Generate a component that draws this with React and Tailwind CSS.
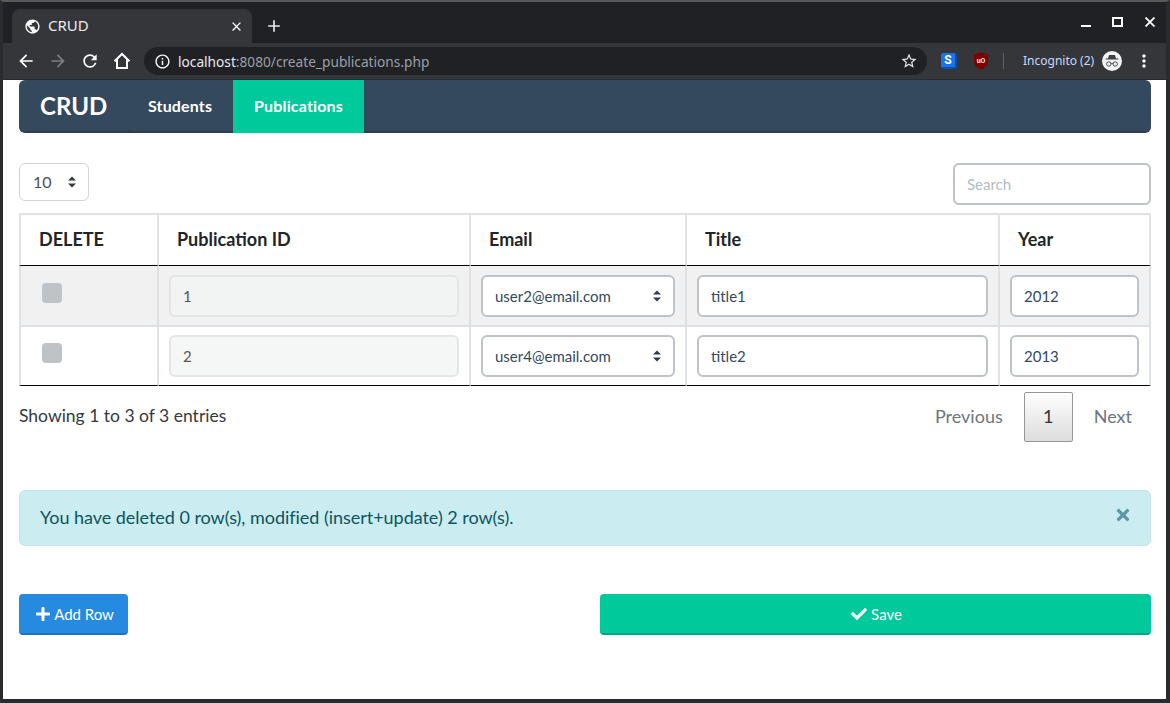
import { FaPlus, FaCheck, FaTimes } from 'react-icons/fa';
import { MdPublic, MdArrowBack, MdArrowForward, MdRefresh, MdMoreVert, MdInfoOutline, MdStarBorder, MdClose, MdAdd } from 'react-icons/md';

function Caret({ className }) {
  return (
    <svg width="8" height="12" viewBox="0 0 8 12" className={className}>
      <path d="M0 4.6 L4 0.6 L8 4.6 Z M0 7.4 L4 11.4 L8 7.4 Z" fill="currentColor" />
    </svg>
  );
}

function HomeIcon() {
  return (
    <svg width="18" height="18" viewBox="0 0 18 18" fill="none" stroke="white" strokeWidth="2">
      <path d="M1.5 9.2 L9 2 L16.5 9.2 M4 7.5 V16 H14 V7.5" />
    </svg>
  );
}

function IncognitoBadge() {
  return (
    <div className="w-5 h-5 rounded-full bg-[#f1f3f4] flex items-center justify-center">
      <svg width="16" height="14" viewBox="0 0 16 14" fill="none">
        <path d="M5 1 H11 L12 4.4 H14.4 V5.4 H1.6 V4.4 H4 Z" fill="#3c4043" />
        <circle cx="4.8" cy="10" r="2.2" stroke="#3c4043" strokeWidth="0.9" />
        <circle cx="11.2" cy="10" r="2.2" stroke="#3c4043" strokeWidth="0.9" />
        <path d="M7 9.6 H9" stroke="#3c4043" strokeWidth="0.9" />
      </svg>
    </div>
  );
}

function UblockIcon() {
  return (
    <svg width="16" height="18" viewBox="0 0 16 18">
      <path d="M8 0.5 L15 2.6 V9.5 C15 13.5 11.5 16 8 17.5 C4.5 16 1 13.5 1 9.5 V2.6 Z" fill="#800000" />
      <text x="8" y="11" textAnchor="middle" fontSize="7" fontWeight="700" fill="#e8e8e8" fontFamily="Roboto, sans-serif">uO</text>
    </svg>
  );
}

function StylusIcon() {
  return (
    <div className="w-4 h-4 rounded-[2px] bg-[#1a73e8] border-r-2 border-b-2 border-[#0d4fa8] flex items-center justify-center text-[12px] font-bold text-white leading-none font-['Roboto',sans-serif]">
      S
    </div>
  );
}

function TabStrip() {
  return (
    <div className="h-[41px] flex items-end pl-[9px] bg-[#202124]">
      <div className="w-[240px] h-[34px] bg-[#35363a] rounded-t-lg flex items-center pl-[12px] pr-[8px] text-[#e8eaed]">
        <MdPublic size={17} className="text-white" />
        <span className="ml-[7px] -mt-[2px] flex-1 text-[15px] font-['Noto_Sans',sans-serif]">CRUD</span>
        <MdClose size={15} className="text-white" />
      </div>
      <div className="h-[34px] ml-[12px] flex items-center">
        <MdAdd size={20} className="text-[#e8eaed]" />
      </div>
      <div className="flex-1 h-full flex items-start justify-end pr-[11px] pt-[15px] text-white">
        <div className="w-[10px] h-[10px] flex items-end">
          <div className="w-[10px] h-[2px] bg-white" />
        </div>
        <div className="w-[11px] h-[10px] border-2 border-white ml-[21px]" />
        <svg width="10" height="10" viewBox="0 0 10 10" stroke="white" strokeWidth="1.8" className="ml-[22px]">
          <path d="M0.5 0.5 L9.5 9.5 M9.5 0.5 L0.5 9.5" />
        </svg>
      </div>
    </div>
  );
}

function Toolbar() {
  return (
    <div className="h-[37px] bg-[#35363a] flex items-center pl-[13px] border-b border-[#2a2b2e] font-['Noto_Sans',sans-serif]">
      <MdArrowBack size={20} className="text-white" />
      <MdArrowForward size={20} className="text-[#7c7d80] ml-[12px]" />
      <MdRefresh size={20} className="text-white ml-[12px]" />
      <div className="ml-[13px]"><HomeIcon /></div>
      <div className="ml-[13px] w-[783px] h-[28px] rounded-full bg-[#202124] flex items-center pl-[10px] pr-[9px]">
        <MdInfoOutline size={17} className="text-white" />
        <span className="ml-[7px] mt-[2px] flex-1 text-[13.7px] text-[#e8eaed]">
          localhost<span className="text-[#9aa0a6]">:8080/create_publications.php</span>
        </span>
        <MdStarBorder size={18} className="text-[#e8eaed]" />
      </div>
      <div className="ml-[14px]"><StylusIcon /></div>
      <div className="ml-[16px]"><UblockIcon /></div>
      <div className="ml-[14px] w-px h-[16px] bg-[#5f6368]" />
      <span className="ml-[19px] text-[12px] text-[#c6dafc]">Incognito (2)</span>
      <div className="ml-[8px]"><IncognitoBadge /></div>
      <MdMoreVert size={20} className="text-white ml-[12px]" />
    </div>
  );
}

function Navbar() {
  return (
    <nav className="h-[53px] bg-[#34495e] border-b-2 border-[#2c3e50] rounded-md flex text-white font-bold">
      <div className="w-[108px] pl-[21px] flex items-center text-[24px]">CRUD</div>
      <div className="w-[106px] pl-[21px] flex items-center text-[16px] tracking-[0.15px] rounded-bl-md border-b-2 border-[#2c3e50] -mb-[2px]">Students</div>
      <div className="w-[131px] pb-[2px] flex items-center justify-center text-[16px] tracking-[0.15px] bg-[#00c99c] -mb-[2px]">Publications</div>
    </nav>
  );
}

function Row({ id, email, title, year, shaded }) {
  const edge = shaded ? 'border-b-2 border-b-[#dee2e6]' : 'border-b border-b-black';
  const cell = `border-r-2 border-r-[#dee2e6] align-top px-[10px] ${edge} ${shaded ? 'pt-[9px]' : 'pt-[8px]'}`;
  const box = 'w-full h-[42px] px-[12px] rounded-md border-2 bg-white border-[#bdc3c7] text-[15px] text-[#34495e] outline-none font-[inherit]';
  return (
    <tr className={shaded ? 'h-[61px] bg-[#f1f1f1]' : 'h-[59px] bg-white'}>
      <td className={`border-x-2 border-x-[#dee2e6] align-top pl-[21px] ${edge} ${shaded ? 'pt-[17px]' : 'pt-[16px]'}`}>
        <div className="w-[20px] h-[20px] rounded-[4px] bg-[#bdc3c7]" />
      </td>
      <td className={cell}>
        <input
          readOnly
          value={id}
          className={`w-full h-[42px] px-[12px] rounded-md border-2 border-[#e2e6e6] text-[15px] text-[#555] outline-none font-[inherit] ${shaded ? 'bg-[#f2f3f3]' : 'bg-[#f5f7f6]'}`}
        />
      </td>
      <td className={cell}>
        <div className={`${box} flex items-center justify-between pr-[12px]`}>
          <span>{email}</span>
          <Caret className="text-[#2c3e50]" />
        </div>
      </td>
      <td className={cell}>
        <input readOnly value={title} className={box} />
      </td>
      <td className={cell}>
        <input readOnly value={year} className={box} />
      </td>
    </tr>
  );
}

function DataTable() {
  const th = 'border-t-2 border-t-[#dee2e6] border-b border-b-black border-r-2 border-r-[#dee2e6] text-left font-bold text-[18px] text-[#212529] pl-[18px] pb-[2px]';
  return (
    <table className="w-full table-fixed border-separate border-spacing-0 mt-[8px]">
      <colgroup>
        <col className="w-[140px]" />
        <col className="w-[312px]" />
        <col className="w-[216px]" />
        <col className="w-[313px]" />
        <col />
      </colgroup>
      <thead>
        <tr className="h-[53px]">
          <th className={`${th} border-l-2 border-l-[#dee2e6]`}>DELETE</th>
          <th className={th}>Publication ID</th>
          <th className={th}>Email</th>
          <th className={th}>Title</th>
          <th className={th}>Year</th>
        </tr>
      </thead>
      <tbody>
        <Row id="1" email="user2@email.com" title="title1" year="2012" shaded />
        <Row id="2" email="user4@email.com" title="title2" year="2013" />
      </tbody>
    </table>
  );
}

export default function App() {
  return (
    <div className="w-[1170px] h-[703px] overflow-hidden bg-white border-l-[3px] border-r-4 border-b-[4px] border-[#2b2b2e] border-t-2 border-t-[#5a5a5c] flex flex-col font-['Lato',sans-serif]">
      <TabStrip />
      <Toolbar />
      <main className="flex-1 bg-white pl-[16px] pr-[15px]">
        <Navbar />

        <div className="mt-[30px] flex justify-between items-start">
          <div className="w-[70px] h-[38px] border border-[#ced4da] rounded-md flex items-center justify-between pl-[13px] pr-[12px] text-[16px] text-[#495057]">
            <span>10</span>
            <Caret className="text-[#343a40]" />
          </div>
          <input
            readOnly
            placeholder="Search"
            className="w-[198px] h-[42px] px-[12px] rounded-md border-2 border-[#bdc3c7] text-[15px] outline-none placeholder:text-[#b2bcc5]"
          />
        </div>

        <DataTable />

        <div className="mt-[5.5px] flex justify-between items-start">
          <div className="mt-[11px] text-[17.5px] text-[#34393f]">Showing 1 to 3 of 3 entries</div>
          <div className="flex items-center text-[18px] text-[#6c757d]">
            <span className="mr-[21px]">Previous</span>
            <span className="w-[49px] h-[50px] flex items-center justify-center border border-[#979797] rounded-[2px] bg-gradient-to-b from-white to-[#dcdcdc] text-[#333]">1</span>
            <span className="ml-[21px] mr-[19px]">Next</span>
          </div>
        </div>

        <div className="mt-[48px] h-[56px] bg-[#cbecf1] border border-[#bee5eb] rounded-md flex items-center justify-between pl-[20px] pr-[18px] text-[18px] tracking-[-0.03px] text-[#0c5460]">
          <span>You have deleted 0 row(s), modified (insert+update) 2 row(s).</span>
          <FaTimes size={18} className="text-[#5c98a3] -mt-[5px]" />
        </div>

        <div className="mt-[48px] flex justify-between">
          <div className="w-[109px] h-[41px] pt-[2px] pl-[2px] bg-[#258ae0] border-b-2 border-[#1e73bd] rounded-[4px] flex items-center justify-center gap-[3px] text-[15px] text-white">
            <FaPlus size={16} />
            <span>Add Row</span>
          </div>
          <div className="w-[551px] h-[41px] pt-[2px] pl-[2px] bg-[#00c99c] border-b-2 border-[#00a883] rounded-[4px] flex items-center justify-center gap-[4px] text-[15px] text-white">
            <FaCheck size={16} />
            <span>Save</span>
          </div>
        </div>
      </main>
    </div>
  );
}
